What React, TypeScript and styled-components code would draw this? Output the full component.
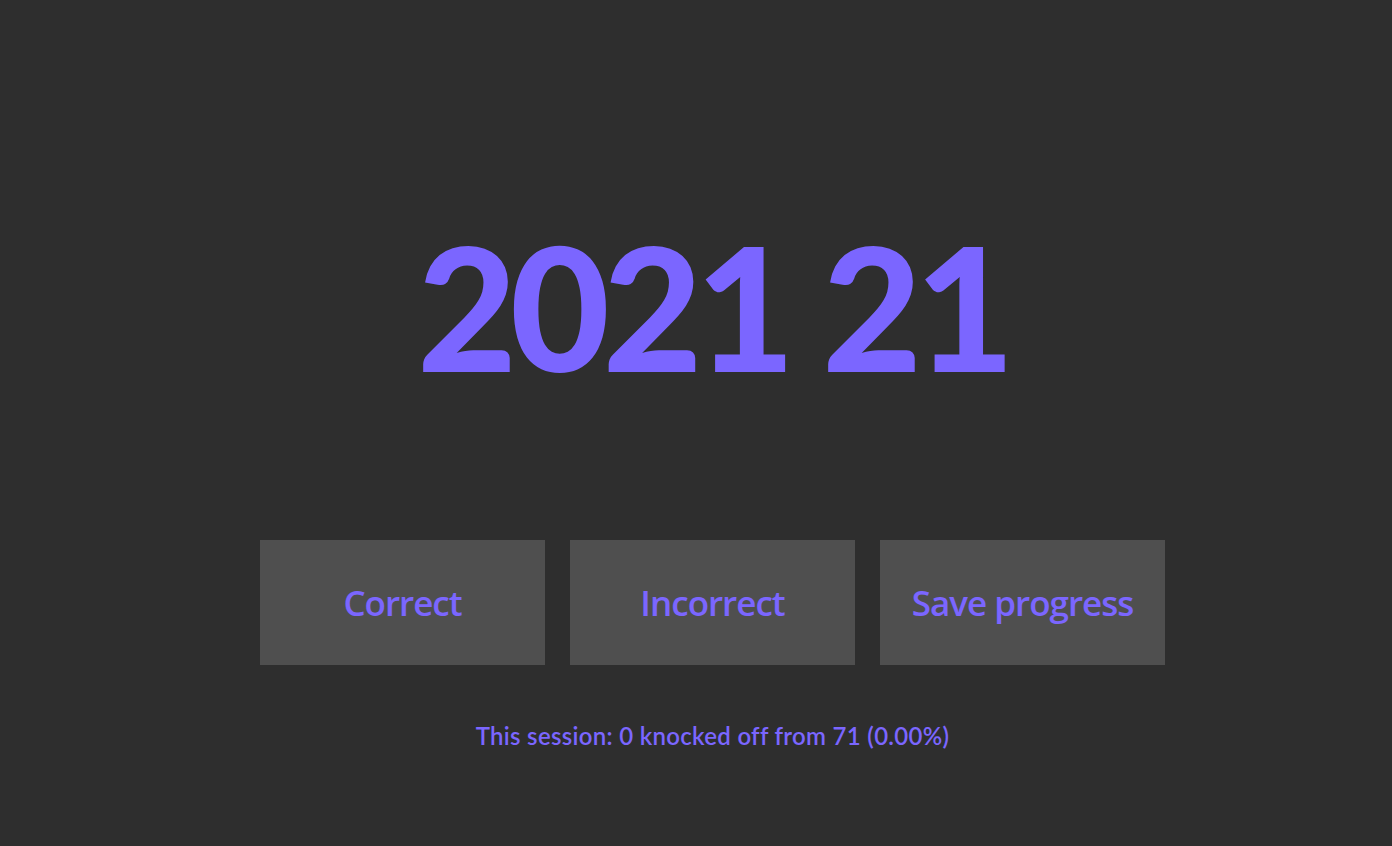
import React from "react";
import styled, { createGlobalStyle } from "styled-components";

const Global = createGlobalStyle`
  html, body { margin: 0; padding: 0; background: #2e2e2e; }
  body { font-family: "Lato", "Open Sans", sans-serif; }
`;

const Page = styled.main`
  box-sizing: border-box;
  width: 100%;
  height: 846px;
  padding-left: 33px;
  display: flex;
  flex-direction: column;
  align-items: center;
  color: #7b66ff;
`;

const Year = styled.h1`
  margin: 220px 0 0;
  font-family: "Lato", sans-serif;
  font-weight: 900;
  font-size: 172px;
  line-height: 172px;
  letter-spacing: -7px;
  color: #7b66ff;
`;

const Actions = styled.div`
  display: flex;
  gap: 25px;
  margin-top: 148px;
`;

const ActionButton = styled.button`
  width: 285px;
  height: 125px;
  border: none;
  background: #4f4f4f;
  color: #7b66ff;
  font-family: "Open Sans", sans-serif;
  font-weight: 600;
  font-size: 35px;
  letter-spacing: -1px;
  cursor: pointer;
`;

const Stats = styled.p`
  margin: 56px 0 0;
  font-family: "Lato", sans-serif;
  font-weight: 600;
  font-size: 24px;
  letter-spacing: 0.3px;
  color: #7b66ff;
`;

export default function App() {
  return (
    <>
      <Global />
      <Page>
        <Year>2021 21</Year>
        <Actions>
          <ActionButton>Correct</ActionButton>
          <ActionButton>Incorrect</ActionButton>
          <ActionButton>Save progress</ActionButton>
        </Actions>
        <Stats>This session: 0 knocked off from 71 (0.00%)</Stats>
      </Page>
    </>
  );
}
